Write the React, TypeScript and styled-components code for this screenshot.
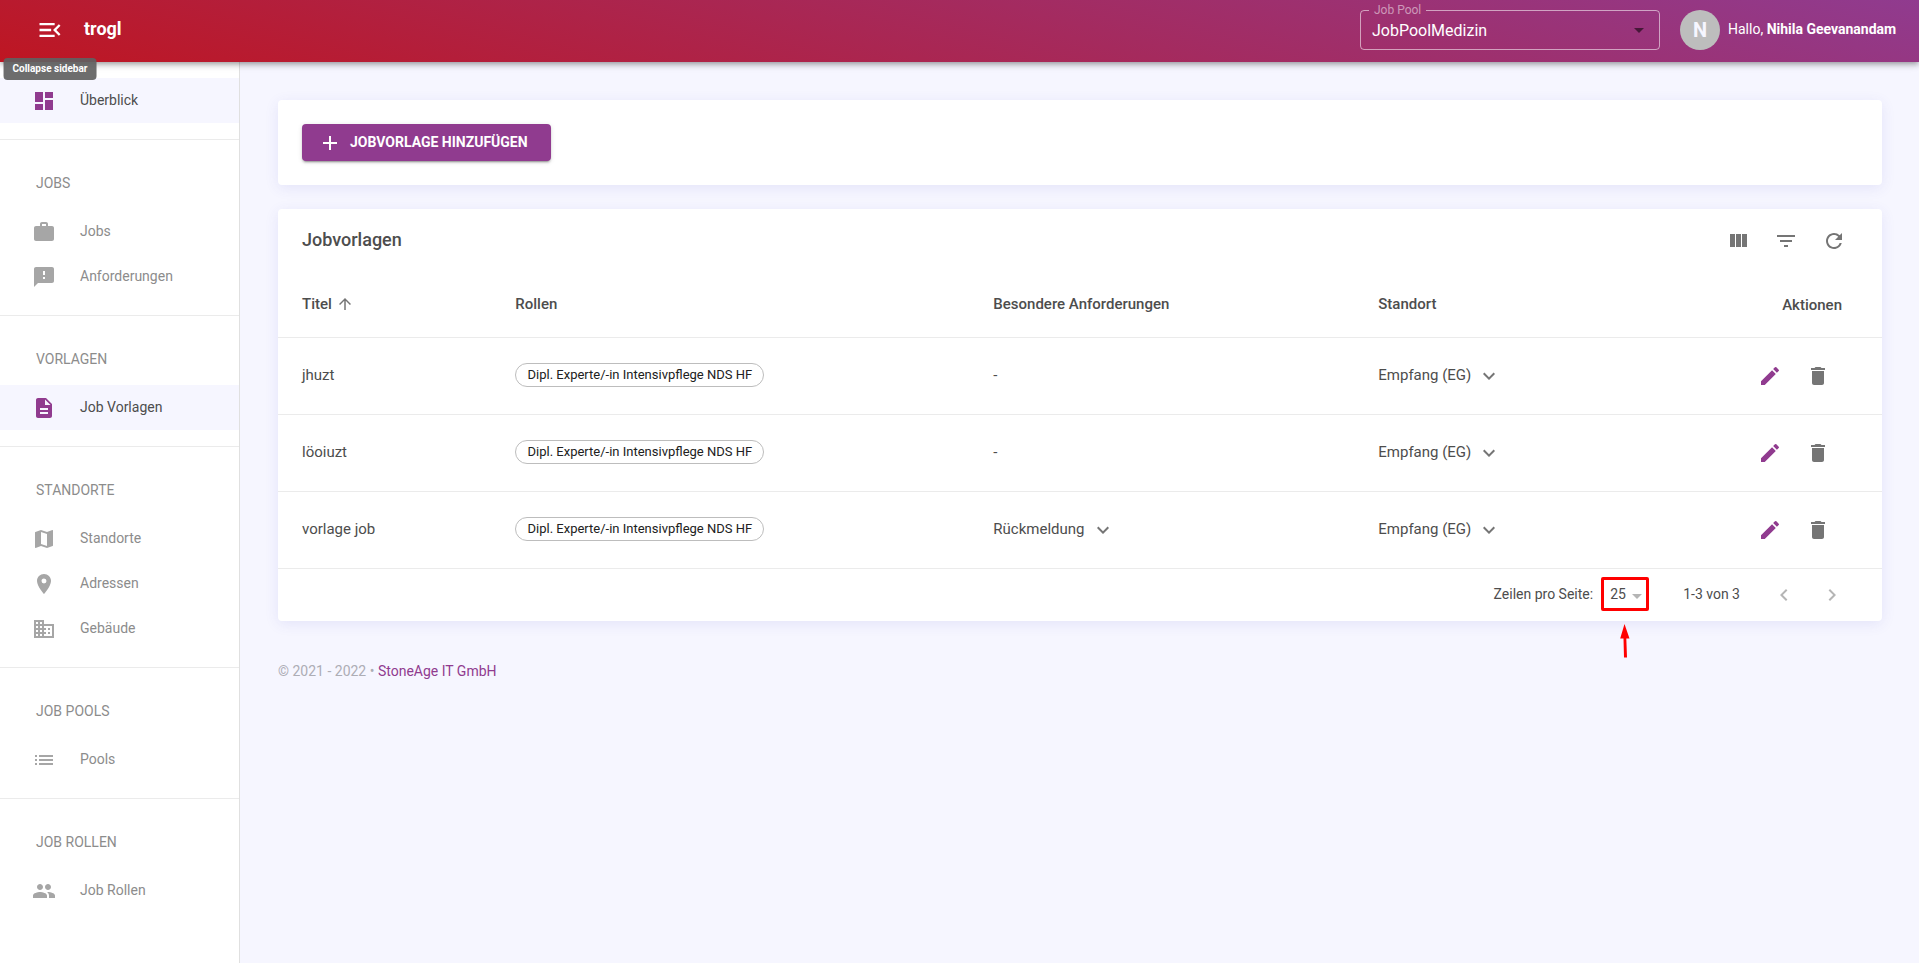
import React from "react";
import styled, { createGlobalStyle } from "styled-components";
import {
  MdAdd,
  MdArrowDropDown,
  MdArrowUpward,
  MdBusiness,
  MdChevronLeft,
  MdChevronRight,
  MdDashboard,
  MdDelete,
  MdDescription,
  MdEdit,
  MdFeedback,
  MdFilterList,
  MdKeyboardArrowDown,
  MdList,
  MdLocationOn,
  MdMap,
  MdMenuOpen,
  MdPeople,
  MdRefresh,
  MdWork,
} from "react-icons/md";

const purple = "#903b8f";
const line = "#ebebeb";

const GlobalStyle = createGlobalStyle`
  *, *::before, *::after { box-sizing: border-box; }
  body {
    margin: 0;
    background: #f6f6ff;
    color: #4d4d4d;
    font-family: Roboto, "Liberation Sans", sans-serif;
    font-size: 14px;
    line-height: 20px;
  }
  button, select { font: inherit; color: inherit; }
  svg { display: block; flex: none; }
`;

const Page = styled.div`
  display: flex;
  flex-direction: column;
  min-height: 100vh;
`;

const Header = styled.header`
  position: relative;
  z-index: 2;
  display: flex;
  align-items: center;
  height: 62px;
  padding: 0 19px 2px 30px;
  color: #fff;
  background: linear-gradient(15deg, #be1622 0%, #903b8f 100%);
  box-shadow: 0 2px 4px -1px rgba(0, 0, 0, 0.2), 0 4px 5px rgba(0, 0, 0, 0.14),
    0 1px 10px rgba(0, 0, 0, 0.12);
`;

const PlainButton = styled.button`
  display: flex;
  align-items: center;
  justify-content: center;
  padding: 0;
  border: 0;
  background: none;
  cursor: pointer;
`;

const Label = styled.span`
  padding-bottom: 2px;
`;

const MenuAnchor = styled.div`
  position: relative;
  width: 40px;
`;

const MenuButton = styled(PlainButton)`
  width: 40px;
  height: 40px;
`;

const Tooltip = styled.span`
  position: absolute;
  top: 48px;
  left: 50%;
  transform: translateX(-50%);
  padding: 4px 9px;
  border-radius: 4px;
  background: rgba(97, 97, 97, 0.92);
  font-size: 10px;
  font-weight: 700;
  line-height: 14px;
  white-space: nowrap;
`;

const Brand = styled.a`
  margin-left: 14px;
  padding-bottom: 2px;
  color: inherit;
  font-size: 18px;
  font-weight: 700;
  text-decoration: none;
`;

const PoolField = styled.fieldset`
  position: relative;
  align-self: flex-end;
  width: 300px;
  height: 46px;
  margin: 0 20px 10px auto;
  padding: 0 11px;
  border: 1px solid rgba(255, 255, 255, 0.55);
  border-radius: 4px;

  legend {
    margin-left: -3px;
    padding: 0 5px;
    color: rgba(255, 255, 255, 0.5);
    font-size: 12px;
    line-height: 12px;
  }

  select {
    display: block;
    width: 100%;
    height: 30px;
    padding: 0;
    border: 0;
    appearance: none;
    background: none;
    font-size: 16px;
  }

  option { color: #333; }

  svg {
    position: absolute;
    right: 8px;
    bottom: 7px;
    color: rgba(0, 0, 0, 0.54);
    pointer-events: none;
  }
`;

const Avatar = styled.span`
  display: flex;
  align-items: center;
  justify-content: center;
  width: 40px;
  height: 40px;
  margin-right: 8px;
  border-radius: 50%;
  background: #bdbdbd;
  color: #f6f6ff;
  font-size: 20px;
  font-weight: 700;
`;

const Greeting = styled(Label)`
  min-width: 172px;
`;

const Body = styled.div`
  display: flex;
  flex: 1;
`;

const Sidebar = styled.nav`
  flex: none;
  width: 240px;
  border-right: 1px solid #e0e0e0;
  background: #fff;
`;

const Section = styled.section`
  padding: 0 0 16px;

  & + & { border-top: 1px solid ${line}; }
  &:first-child { padding-top: 16px; }
`;

const SectionTitle = styled.h2`
  margin: 0;
  padding: 33px 36px 16px;
  color: #8c8c8c;
  font-size: 14px;
  font-weight: 400;
  text-transform: uppercase;
`;

const NavLink = styled.a<{ $active?: boolean }>`
  display: flex;
  align-items: center;
  gap: 24px;
  height: 45px;
  padding: 0 32px;
  background: ${(p) => (p.$active ? "#f6f6ff" : "transparent")};
  color: ${(p) => (p.$active ? "#4d4d4d" : "#8c8c8c")};
  text-decoration: none;

  svg { color: ${(p) => (p.$active ? purple : "#a6a6a6")}; }
`;

const Main = styled.main`
  flex: 1;
  min-width: 0;
  padding: 38px 37px 38px 38px;
`;

const Card = styled.section`
  margin-bottom: 24px;
  border-radius: 4px;
  background: #fff;
  box-shadow: 0 3px 14px rgba(70, 70, 200, 0.1);
`;

const ActionCard = styled(Card)`
  padding: 24px;
`;

const AddButton = styled.button`
  display: flex;
  align-items: center;
  gap: 8px;
  min-width: 249px;
  height: 37px;
  padding: 0 16px;
  border: 0;
  border-radius: 4px;
  background: ${purple};
  color: #fff;
  font-size: 14px;
  font-weight: 700;
  text-transform: uppercase;
  cursor: pointer;
  box-shadow: 0 3px 1px -2px rgba(0, 0, 0, 0.2), 0 2px 2px rgba(0, 0, 0, 0.14),
    0 1px 5px rgba(0, 0, 0, 0.12);
`;

const Toolbar = styled.div`
  display: flex;
  align-items: center;
  height: 64px;
  padding: 0 24px;
`;

const CardTitle = styled.h1`
  flex: 1;
  margin: 0;
  padding-bottom: 2px;
  font-size: 18px;
  font-weight: 500;
`;

const IconButton = styled(PlainButton)<{ $tone?: string }>`
  width: 48px;
  height: 48px;
  color: ${(p) => p.$tone ?? "#757575"};
`;

const Table = styled.table`
  width: 100%;
  border-collapse: separate;
  border-spacing: 0;
  table-layout: fixed;

  th, td {
    padding: 0 16px 2px;
    border-bottom: 1px solid ${line};
    text-align: left;
    font-size: 15px;
  }

  th { height: 65px; font-weight: 500; }
  td { height: 77px; }
  th:first-child, td:first-child { padding-left: 24px; }
  th:last-child, td:last-child {
    padding-right: 40px;
    padding-bottom: 0;
    text-align: right;
  }
`;

const Col = styled.col<{ $width?: string }>`
  width: ${(p) => p.$width ?? "auto"};
`;

const SortButton = styled(PlainButton)`
  gap: 4px;
  font-weight: 500;

  svg { color: #757575; }
`;

const ExpandButton = styled(PlainButton)`
  gap: 6px;

  svg { margin-top: 2px; color: #757575; }
`;

const Chip = styled.span`
  display: inline-flex;
  align-items: center;
  justify-content: center;
  min-width: 249px;
  height: 24px;
  padding: 0 8px;
  border: 1px solid #bdbdbd;
  border-radius: 12px;
  color: #212121;
  font-size: 13px;
  white-space: nowrap;
  vertical-align: middle;
`;

const RowActions = styled.div`
  display: flex;
  justify-content: flex-end;
`;

const Pagination = styled.div`
  display: flex;
  align-items: center;
  justify-content: flex-end;
  height: 52px;
  padding: 0 26px 2px 24px;
`;

const PageSize = styled.div`
  position: relative;
  width: 48px;
  height: 34px;
  margin: 0 34px 0 8px;

  select {
    width: 100%;
    height: 100%;
    padding: 0 9px;
    border: 0;
    appearance: none;
    background: none;
  }

  & > svg {
    position: absolute;
    right: 0;
    top: 7px;
    color: #b5b5b5;
    pointer-events: none;
  }
`;

const Highlight = styled.div`
  position: absolute;
  inset: 0;
  border: 3px solid #ff0000;
  border-radius: 2px;
  pointer-events: none;
`;

const Pointer = styled.div`
  position: absolute;
  top: 47px;
  left: 18px;
`;

const PageButtons = styled.div`
  display: flex;
  margin: 2px 0 0 20px;
`;

const Footer = styled.footer`
  padding-top: 16px;
  color: #adadb5;

  a { color: ${purple}; text-decoration: none; }
`;

const ColumnsIcon = () => (
  <svg width="24" height="24" viewBox="0 0 24 24" fill="currentColor" aria-hidden="true">
    <path d="M10 18h5V5h-5v13zm-6 0h5V5H4v13zM16 5v13h5V5h-5z" />
  </svg>
);

const sections = [
  { items: [{ label: "Überblick", icon: MdDashboard, active: true }] },
  {
    title: "Jobs",
    items: [
      { label: "Jobs", icon: MdWork },
      { label: "Anforderungen", icon: MdFeedback },
    ],
  },
  { title: "Vorlagen", items: [{ label: "Job Vorlagen", icon: MdDescription, active: true }] },
  {
    title: "Standorte",
    items: [
      { label: "Standorte", icon: MdMap },
      { label: "Adressen", icon: MdLocationOn },
      { label: "Gebäude", icon: MdBusiness },
    ],
  },
  { title: "Job Pools", items: [{ label: "Pools", icon: MdList }] },
  { title: "Job Rollen", items: [{ label: "Job Rollen", icon: MdPeople }] },
] as {
  title?: string;
  items: { label: string; icon: React.ComponentType<{ size?: number }>; active?: boolean }[];
}[];

const rows = [
  { title: "jhuzt", role: "Dipl. Experte/-in Intensivpflege NDS HF", need: "", place: "Empfang (EG)" },
  { title: "löoiuzt", role: "Dipl. Experte/-in Intensivpflege NDS HF", need: "", place: "Empfang (EG)" },
  { title: "vorlage job", role: "Dipl. Experte/-in Intensivpflege NDS HF", need: "Rückmeldung", place: "Empfang (EG)" },
];

export default function App() {
  return (
    <Page>
      <GlobalStyle />
      <Header>
        <MenuAnchor>
          <MenuButton aria-describedby="menu-tip" aria-label="Menu">
            <MdMenuOpen size={28} />
          </MenuButton>
          <Tooltip id="menu-tip" role="tooltip">Collapse sidebar</Tooltip>
        </MenuAnchor>
        <Brand href="#">trogl</Brand>
        <PoolField>
          <legend><label htmlFor="pool">Job Pool</label></legend>
          <select id="pool" defaultValue="JobPoolMedizin">
            <option>JobPoolMedizin</option>
          </select>
          <MdArrowDropDown size={24} />
        </PoolField>
        <Avatar>N</Avatar>
        <Greeting>Hallo, <b>Nihila Geevanandam</b></Greeting>
      </Header>
      <Body>
        <Sidebar>
          {sections.map((section, i) => (
            <Section key={i}>
              {section.title && <SectionTitle>{section.title}</SectionTitle>}
              {section.items.map(({ label, icon: Icon, active }) => (
                <NavLink key={label} href="#" $active={active}>
                  <Icon size={24} />
                  <Label>{label}</Label>
                </NavLink>
              ))}
            </Section>
          ))}
        </Sidebar>
        <Main>
          <ActionCard>
            <AddButton>
              <MdAdd size={24} />
              <Label>Jobvorlage hinzufügen</Label>
            </AddButton>
          </ActionCard>
          <Card>
            <Toolbar>
              <CardTitle>Jobvorlagen</CardTitle>
              <IconButton aria-label="Spalten"><ColumnsIcon /></IconButton>
              <IconButton aria-label="Filter"><MdFilterList size={24} /></IconButton>
              <IconButton aria-label="Aktualisieren"><MdRefresh size={24} /></IconButton>
            </Toolbar>
            <Table>
              <colgroup>
                <Col $width="13.8%" />
                <Col $width="29.8%" />
                <Col $width="24%" />
                <Col />
                <Col $width="160px" />
              </colgroup>
              <thead>
                <tr>
                  <th><SortButton>Titel<MdArrowUpward size={18} /></SortButton></th>
                  <th>Rollen</th>
                  <th>Besondere Anforderungen</th>
                  <th>Standort</th>
                  <th>Aktionen</th>
                </tr>
              </thead>
              <tbody>
                {rows.map((row) => (
                  <tr key={row.title}>
                    <td>{row.title}</td>
                    <td><Chip>{row.role}</Chip></td>
                    <td>
                      {row.need ? (
                        <ExpandButton>{row.need}<MdKeyboardArrowDown size={24} /></ExpandButton>
                      ) : "-"}
                    </td>
                    <td><ExpandButton>{row.place}<MdKeyboardArrowDown size={24} /></ExpandButton></td>
                    <td>
                      <RowActions>
                        <IconButton $tone={purple} aria-label="Bearbeiten"><MdEdit size={24} /></IconButton>
                        <IconButton aria-label="Löschen"><MdDelete size={24} /></IconButton>
                      </RowActions>
                    </td>
                  </tr>
                ))}
              </tbody>
            </Table>
            <Pagination>
              <label htmlFor="page-size">Zeilen pro Seite:</label>
              <PageSize>
                <select id="page-size" defaultValue="25">
                  <option>25</option>
                </select>
                <MdArrowDropDown size={24} />
                <Highlight />
                <Pointer>
                  <svg width="12" height="34" viewBox="0 0 12 34" fill="#ff0000" aria-hidden="true">
                    <path d="M5.5 0 10.5 14.5H7.3L8 33.500H5L4.500 14.500H1.200z" />
                  </svg>
                </Pointer>
              </PageSize>
              <span>1-3 von 3</span>
              <PageButtons>
                <IconButton $tone="#b5b5b5" aria-label="Vorherige Seite"><MdChevronLeft size={24} /></IconButton>
                <IconButton $tone="#b5b5b5" aria-label="Nächste Seite"><MdChevronRight size={24} /></IconButton>
              </PageButtons>
            </Pagination>
          </Card>
          <Footer>
            © 2021 - 2022 • <a href="#">StoneAge IT GmbH</a>
          </Footer>
        </Main>
      </Body>
    </Page>
  );
}
